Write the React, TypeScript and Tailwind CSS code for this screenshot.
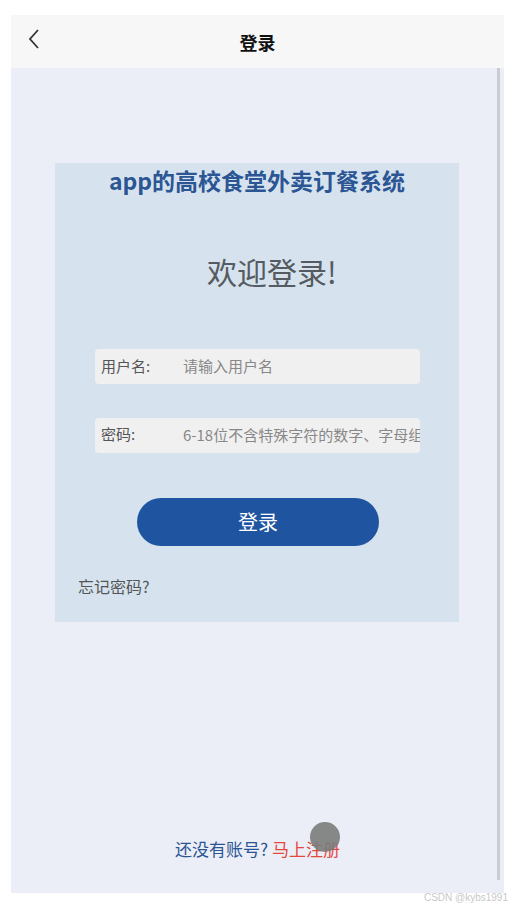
export default function App() {
  const font = { fontFamily: '"Noto Sans CJK SC", "Noto Sans", sans-serif' };
  return (
    <div className="relative w-[511px] h-[907px] bg-white" style={font}>
      <div className="ml-[11px] pt-[15px] w-[493px] flex flex-col">
        {/* header */}
        <div className="relative h-[53px] bg-[#f7f7f7] flex items-center justify-center">
          <svg className="absolute left-[16px] top-[13px]" width="14" height="22" viewBox="0 0 14 22" fill="none">
            <path d="M11 2 L3 11 L11 20" stroke="#333" strokeWidth="1.8" />
          </svg>
          <span className="text-[18px] font-bold text-[#111] leading-none">登录</span>
        </div>

        {/* content */}
        <div className="relative h-[825px] bg-[#ebeef6]">
          <div className="absolute right-[4px] top-0 w-[3px] h-[812px] bg-[#c9ccd3]" />

          <div className="ml-[44px] mt-[95px] w-[404px] h-[459px] bg-[#d6e3ef] flex flex-col">
            <div className="pt-[2px] text-center text-[23px] font-bold leading-[30px] text-[#2b5593]">
              app的高校食堂外卖订餐系统
            </div>
            <div className="mt-[56px] pl-[152px] text-[30px] leading-[40px] text-[#555b60]">欢迎登录!</div>

            <div className="mt-[58px] ml-[40px] w-[325px] flex flex-col gap-[34px]">
              <div className="h-[35px] rounded-[4px] bg-[#f0f0f0] flex items-center pl-[6px] overflow-hidden whitespace-nowrap">
                <span className="w-[82px] shrink-0 text-[15px] text-[#555]">用户名:</span>
                <span className="text-[15px] text-[#888]">请输入用户名</span>
              </div>
              <div className="h-[35px] rounded-[4px] bg-[#f0f0f0] flex items-center pl-[6px] overflow-hidden whitespace-nowrap">
                <span className="w-[82px] shrink-0 text-[15px] text-[#555] -mt-[3px]">密码:</span>
                <span className="text-[15px] text-[#888]">6-18位不含特殊字符的数字、字母组合</span>
              </div>
            </div>

            <button className="mt-[45px] ml-[82px] w-[242px] h-[48px] rounded-full bg-[#1f55a0] text-white text-[20px]">
              登录
            </button>

            <div className="mt-[30px] ml-[23px] text-[16px] leading-[20px] text-[#555]">忘记密码?</div>
          </div>

          <div className="absolute left-0 right-0 top-[770px] flex justify-center">
            <span className="text-[17px] leading-[22px] text-[#2b5593]">
              还没有账号? <span className="text-[#e4473c]">马上注册</span>
            </span>
          </div>
          <div className="absolute left-[299px] top-[754px] w-[30px] h-[30px] rounded-full bg-[#7b7b7b] opacity-90" />
        </div>
      </div>
      <div className="absolute right-[3px] top-[890px] text-[10px] text-[#c8c8c8]" style={{ fontFamily: '"Liberation Sans", sans-serif' }}>
        CSDN @kybs1991
      </div>
    </div>
  );
}
